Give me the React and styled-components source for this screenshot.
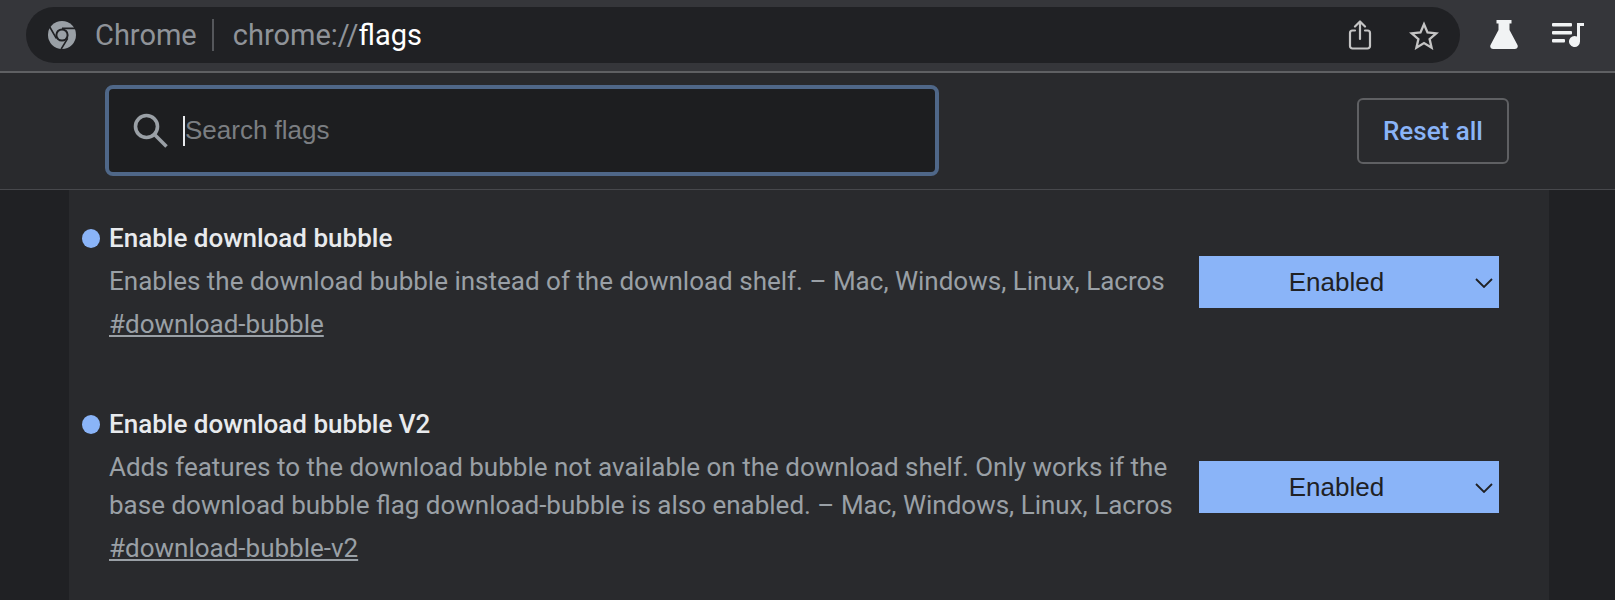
import React from 'react';
import styled, { createGlobalStyle } from 'styled-components';

const GlobalStyle = createGlobalStyle`
  html, body {
    margin: 0;
    padding: 0;
    background: #202124;
    overflow: hidden;
  }
`;

const flags = [
  {
    title: 'Enable download bubble',
    lines: ['Enables the download bubble instead of the download shelf. – Mac, Windows, Linux, Lacros'],
    link: '#download-bubble',
  },
  {
    title: 'Enable download bubble V2',
    lines: [
      'Adds features to the download bubble not available on the download shelf. Only works if the',
      'base download bubble flag download-bubble is also enabled. – Mac, Windows, Linux, Lacros',
    ],
    link: '#download-bubble-v2',
  },
];

const App = () => {
  return (
    <Page>
      <GlobalStyle />
      <Toolbar>
        <Omnibox>
          <ChromeLogo />
          <SiteName>Chrome</SiteName>
          <Divider />
          <Url>chrome://<strong>flags</strong></Url>
          <OmniIcons>
            <ShareIcon />
            <StarIcon />
          </OmniIcons>
        </Omnibox>
        <ToolIcons>
          <FlaskIcon />
          <QueueIcon />
        </ToolIcons>
      </Toolbar>
      <Header>
        <SearchBox>
          <SearchIcon />
          <Caret />
          <Placeholder>Search flags</Placeholder>
        </SearchBox>
        <ResetButton type="button">Reset all</ResetButton>
      </Header>
      <Panel>
        {flags.map((flag) => (
          <FlagRow key={flag.link}>
            <FlagInfo>
              <FlagTitle>{flag.title}</FlagTitle>
              {flag.lines.map((line) => (
                <FlagText key={line}>{line}</FlagText>
              ))}
              <FlagLink href={flag.link}>{flag.link}</FlagLink>
            </FlagInfo>
            <Select>
              Enabled
              <Chevron />
            </Select>
          </FlagRow>
        ))}
      </Panel>
    </Page>
  );
};

const ChromeLogo = () => (
  <svg width="28" height="28" viewBox="0 0 28 28" fill="none">
    <circle cx="14" cy="14" r="14" fill="#9aa0a6" />
    <circle cx="14" cy="14" r="6.6" fill="#202124" />
    <circle cx="14" cy="14" r="4.6" fill="#9aa0a6" />
    <path d="M14 7.4H27M8.3 17.3L1.8 6M19.7 17.3L13.2 28" stroke="#202124" strokeWidth="1.6" />
  </svg>
);

const ShareIcon = () => (
  <svg width="24" height="30" viewBox="0 0 24 30" fill="none" stroke="#c4c4c4" strokeWidth="2.2" strokeLinecap="round" strokeLinejoin="round">
    <path d="M7 10.500H4.500a2.500 2.500 0 0 0-2.500 2.500v13a2.500 2.500 0 0 0 2.500 2.500h15a2.500 2.500 0 0 0 2.500-2.500V13a2.500 2.500 0 0 0-2.500-2.500H17" />
    <path d="M12 19V2M7 6.500l5-5 5 5" />
  </svg>
);

const StarIcon = () => (
  <svg width="30" height="29" viewBox="0 0 30 29" fill="none" stroke="#c4c4c4" strokeWidth="2.300" strokeLinejoin="miter">
    <path d="M15 3.300l3.500 8.200 8.800.8-6.700 5.800 2 8.600-7.600-4.600-7.600 4.600 2-8.600-6.700-5.800 8.800-.8z" />
  </svg>
);

const FlaskIcon = () => (
  <svg width="28" height="29" viewBox="0 0 28 29" fill="#f1f3f4">
    <path d="M6.500 0h15v3.500h-2v6.500l8 15c.9 2-.4 4-2.800 4H3.300c-2.400 0-3.700-2-2.800-4l8-15V3.500h-2z" />
  </svg>
);

const QueueIcon = () => (
  <svg width="32" height="25" viewBox="0 0 32 25" fill="#f1f3f4">
    <rect x="0" y="1" width="20" height="3.400" rx="1" />
    <rect x="0" y="9" width="20" height="3.400" rx="1" />
    <rect x="0" y="17" width="13" height="3.400" rx="1" />
    <path d="M25 1h7v3h-4v15.500a5.500 5.500 0 1 1-3-4.900z" />
  </svg>
);

const SearchIcon = () => (
  <svg width="35" height="35" viewBox="0 0 35 35" fill="none" stroke="#9aa0a6" strokeWidth="3.600">
    <circle cx="13.500" cy="13.500" r="11" />
    <path d="M21.500 21.500L33.500 33.500" />
  </svg>
);

const Chevron = styled((props) => (
  <svg {...props} width="18" height="10" viewBox="0 0 18 10" fill="none" stroke="#202124" strokeWidth="1.800">
    <path d="M1 1l8 8 8-8" />
  </svg>
))`
  position: absolute;
  right: 6px;
  top: 22px;
`;

const Page = styled.div`
  width: 1615px;
  height: 600px;
  display: flex;
  flex-direction: column;
  overflow: hidden;
  background: #202124;
  font-family: Roboto, sans-serif;
`;

const Toolbar = styled.div`
  box-sizing: border-box;
  height: 73px;
  flex: none;
  display: flex;
  align-items: flex-start;
  padding: 7px 0 0 26px;
  background: #35363a;
  border-bottom: 2px solid #5f6063;
`;

const Omnibox = styled.div`
  box-sizing: border-box;
  width: 1434px;
  height: 56px;
  display: flex;
  align-items: center;
  padding: 0 21px 0 22px;
  border-radius: 28px;
  background: #202124;
`;

const SiteName = styled.span`
  margin-left: 19px;
  font-size: 29px;
  color: #8f9399;
`;

const Divider = styled.span`
  width: 2px;
  height: 32px;
  margin: 0 19px 0 15px;
  background: #55575b;
`;

const Url = styled.span`
  font-size: 29px;
  color: #8f9399;

  strong {
    font-weight: 400;
    color: #fff;
  }
`;

const OmniIcons = styled.div`
  margin-left: auto;
  display: flex;
  align-items: center;
  gap: 37px;
`;

const ToolIcons = styled.div`
  display: flex;
  align-items: center;
  gap: 34px;
  margin-left: 30px;
  padding-top: 13px;
`;

const Header = styled.div`
  box-sizing: border-box;
  height: 117px;
  flex: none;
  display: flex;
  align-items: center;
  justify-content: space-between;
  padding: 0 106px 1px 105px;
  background: #292a2d;
  border-bottom: 1px solid #47484c;
`;

const SearchBox = styled.div`
  box-sizing: border-box;
  width: 834px;
  height: 91px;
  display: flex;
  align-items: center;
  padding-left: 24px;
  border: 4px solid #4f6788;
  border-radius: 8px;
  background: #1d1e20;
`;

const Caret = styled.span`
  width: 2px;
  height: 30px;
  margin-left: 15px;
  background: #e8eaed;
`;

const Placeholder = styled.span`
  font-family: 'Liberation Sans', Arial, sans-serif;
  font-size: 26px;
  color: #7b7e82;
`;

const ResetButton = styled.button`
  box-sizing: border-box;
  width: 152px;
  height: 66px;
  padding: 0;
  border: 2px solid #5f6063;
  border-radius: 6px;
  background: transparent;
  color: #8ab4f8;
  font-family: Roboto, sans-serif;
  font-size: 26px;
  font-weight: 500;
`;

const Panel = styled.div`
  box-sizing: border-box;
  flex: 1;
  width: 1480px;
  margin-left: 69px;
  padding: 30px 50px 0 13px;
  background: #292a2d;
`;

const FlagRow = styled.div`
  display: flex;
  justify-content: space-between;
  align-items: center;
  margin-bottom: 63px;
`;

const FlagInfo = styled.div`
  padding-left: 27px;
`;

const FlagTitle = styled.div`
  position: relative;
  height: 37px;
  margin-bottom: 5px;
  font-size: 26px;
  font-weight: 500;
  line-height: 37px;
  color: #e8eaed;

  &::before {
    content: '';
    position: absolute;
    left: -27px;
    top: 9px;
    width: 18px;
    height: 19px;
    border-radius: 50%;
    background: #8ab4f8;
  }
`;

const FlagText = styled.div`
  font-size: 26px;
  line-height: 38px;
  color: #9aa0a6;
  white-space: nowrap;
`;

const FlagLink = styled.a`
  display: block;
  margin-top: 5px;
  font-size: 26px;
  line-height: 38px;
  color: #9aa0a6;
`;

const Select = styled.div`
  position: relative;
  box-sizing: border-box;
  width: 300px;
  height: 52px;
  flex: none;
  padding-right: 25px;
  background: #8ab4f8;
  color: #202124;
  font-family: 'Liberation Sans', Arial, sans-serif;
  font-size: 26px;
  line-height: 52px;
  text-align: center;
`;

export default App;
